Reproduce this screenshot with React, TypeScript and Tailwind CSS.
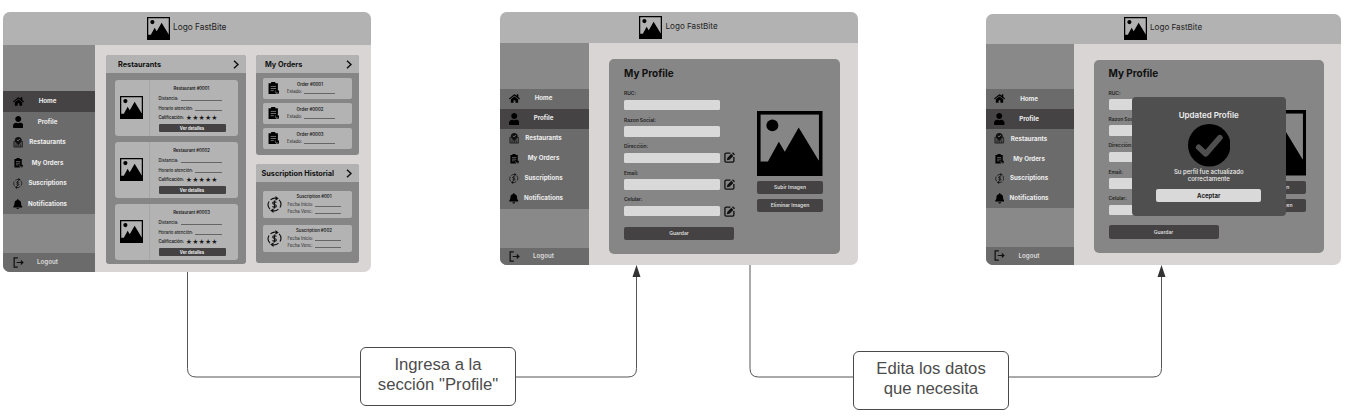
import type { ReactNode } from 'react';
import { FaBell, FaHome, FaUser } from 'react-icons/fa';

type IconProps = { className?: string };

function PictureIcon({ className = '' }: IconProps) {
  return (
    <svg viewBox="0 0 66 66" className={`block shrink-0 ${className}`}>
      <rect x="1.8" y="1.8" width="62.4" height="62.4" fill="none" stroke="#000" strokeWidth="3.6" />
      <circle cx="15.5" cy="14.5" r="6" />
      <path d="M2 51H11L22 31L28 41L42 16.500L62 49.500H64V64H2Z" />
    </svg>
  );
}

function ClipboardIcon({ className = '' }: IconProps) {
  return (
    <svg viewBox="0 0 22 24" className={`block shrink-0 ${className}`}>
      <path d="M1 2.500H6V0H14V2.500H19V14L15 23H1Z" />
      <path d="M14 21L15.500 17L19 15L22 18L20 23Z" />
      <path d="M5 8.500H15.500M5 12.500H15.500M5 16.500H11" stroke="#8a8a8a" strokeWidth="1.500" />
      <path d="M14 16V20.500H19" stroke="#aaa" strokeWidth="0.900" fill="none" />
    </svg>
  );
}

function CycleIcon({ className = '' }: IconProps) {
  return (
    <svg viewBox="0 0 24 28" className={`block shrink-0 ${className}`} fill="none" stroke="#111" strokeWidth="1.900">
      <path d="M4.500 21.500A10.300 10.300 0 0 1 3 9M5.500 6.500A10.500 10.500 0 0 1 14 3.700M19.500 6.500A10.300 10.300 0 0 1 21 19M18.500 21.500A10.500 10.500 0 0 1 10 24.300" />
      <path d="M13.500 0L19 4L13.500 8ZM10.500 20L5 24L10.500 28Z" fill="#111" stroke="none" />
      <path d="M15 11Q14.500 9.500 12 9.500Q9 9.500 9 11.700Q9 13.700 12 14Q15 14.300 15 16.400Q15 18.500 12 18.500Q9.300 18.500 8.900 16.900M12 7.500V20.500" />
    </svg>
  );
}

function StoreIcon({ className = '' }: IconProps) {
  return (
    <svg viewBox="0 0 24 24" className={`block shrink-0 ${className}`}>
      <path d="M2 10H22V23H2Z" fill="#4c4c4c" stroke="#1c1c1c" strokeWidth="1.800" />
      <path d="M12 0C7 0 4 3.500 4 7.500C4 12 12 18 12 18S20 12 20 7.500C20 3.500 17 0 12 0Z" fill="#111" />
      <path d="M9 6.500L11.500 9L15.500 4.500" fill="none" stroke="#999" strokeWidth="1.500" />
      <path d="M7 17V23M12 18V23M17 17V23" stroke="#1c1c1c" strokeWidth="1.500" />
    </svg>
  );
}

function LogoutIcon({ className = '' }: IconProps) {
  return (
    <svg viewBox="0 0 24 24" className={`block shrink-0 ${className}`} fill="none" stroke="#111" strokeWidth="2.700">
      <path d="M10.500 2H2.500V22H10.500M8 12H21" />
      <path d="M17 6L23.500 12L17 18Z" fill="#111" stroke="none" />
    </svg>
  );
}

function EditIcon({ className = '' }: IconProps) {
  return (
    <svg viewBox="0 0 24 24" className={`block shrink-0 ${className}`} fill="none" stroke="#111" strokeWidth="2.900">
      <path d="M14 2.500H4.500Q2 2.500 2 5V19.500Q2 22 4.500 22H19Q21.500 22 21.500 19.500V11" />
      <path d="M6 18L7.500 12.500L16 4L20.500 8.500L12 17ZM17.500 2.500L19.500 0.500L24 5L22 7Z" fill="#111" stroke="none" />
    </svg>
  );
}

function Chevron({ className = '' }: IconProps) {
  return (
    <svg viewBox="0 0 6 9" className={`block h-[9px] w-[6px] shrink-0 ${className}`} fill="none" stroke="#111" strokeWidth="1.500">
      <path d="M1 0.700L5 4.500L1 8.300" />
    </svg>
  );
}

const navItems = [
  { label: 'Home', icon: <FaHome className="size-[11px] text-black" /> },
  { label: 'Profile', icon: <FaUser className="h-[12px] w-[10.500px] text-black" /> },
  { label: 'Restaurants', icon: <StoreIcon className="size-[10.500px]" /> },
  { label: 'My Orders', icon: <ClipboardIcon className="h-[10px] w-[9px]" /> },
  { label: 'Suscriptions', icon: <CycleIcon className="h-[11px] w-[9.500px]" /> },
  { label: 'Notifications', icon: <FaBell className="h-[10.500px] w-[9.500px] text-black" /> },
];

type ScreenProps = {
  frame: string;
  header: string;
  logo: string;
  sidebar: string;
  item: string;
  navTop: string;
  logout: string;
  active: string;
  children: ReactNode;
};

function Screen({ frame, header, logo, sidebar, item, navTop, logout, active, children }: ScreenProps) {
  return (
    <div className={`absolute flex flex-col overflow-hidden rounded-[7px] bg-[#d9d5d5] ${frame}`}>
      <div className={`flex shrink-0 items-start bg-[#b2b2b2] ${header}`}>
        <div className={`flex items-center gap-[3.500px] ${logo}`}>
          <PictureIcon className="size-[23px]" />
          <span className="pb-[2px] leading-none text-[#222]">Logo FastBite</span>
        </div>
      </div>
      <div className="flex min-h-0 flex-1">
        <div className={`flex shrink-0 flex-col bg-[#898989] ${sidebar}`}>
          <div className={`bg-[#6b6b6b] ${navTop}`}>
            {navItems.map(({ label, icon }) => (
              <div key={label} className={`flex items-center ${item} ${label === active ? 'bg-[#464344]' : ''}`}>
                <span className="flex w-[14px] justify-center">{icon}</span>
                <span className="w-[45px] text-center text-[6.200px] leading-none font-bold whitespace-nowrap text-[#eee]">{label}</span>
              </div>
            ))}
          </div>
          <div className={`mt-auto flex items-center bg-[#6b6b6b] ${logout}`}>
            <span className="flex w-[14px] justify-center">
              <LogoutIcon className="size-[11px]" />
            </span>
            <span className="w-[45px] text-center text-[6.200px] leading-none font-semibold text-[#ddd]">Logout</span>
          </div>
        </div>
        {children}
      </div>
    </div>
  );
}

function Panel({ title, className, head, body, children }: { title: string; className: string; head: string; body: string; children: ReactNode }) {
  return (
    <div className={`flex flex-col overflow-hidden rounded-[3px] bg-[#868686] ${className}`}>
      <div className={`flex h-[18px] shrink-0 items-center justify-between bg-[#b2b2b2] ${head}`}>
        <span className="pt-[1px] text-[7.300px] leading-none font-bold whitespace-nowrap text-[#111]">{title}</span>
        <Chevron />
      </div>
      <div className={`flex flex-col ${body}`}>{children}</div>
    </div>
  );
}

function Blank({ label, className, line }: { label: string; className: string; line: string }) {
  return (
    <div className={`flex items-center ${className}`}>
      <span className="whitespace-nowrap">{label}</span>
      <span className={`mt-[4px] h-px bg-[#666] ${line}`} />
    </div>
  );
}

function RestaurantCard({ name }: { name: string }) {
  return (
    <div className="flex h-[55.500px] rounded-[3px] bg-[#b3b3b3]">
      <div className="flex w-[34.500px] items-center justify-center border-r border-[#a6a6a6]">
        <PictureIcon className="size-[23px]" />
      </div>
      <div className="flex flex-1 flex-col pl-[9px] text-[4.200px] leading-[5px] font-medium text-[#181818]">
        <div className="mt-[5.500px] w-[66px] text-center font-semibold">{name}</div>
        <Blank label="Distancia:" className="mt-[5px] h-[5px] w-[63px] justify-between" line="w-[41px]" />
        <Blank label="Horario atención:" className="mt-[5px] h-[5px] w-[63px] justify-between" line="w-[27px]" />
        <div className="mt-[4.500px] flex h-[5px] items-center gap-[2px] font-semibold">
          <span className="whitespace-nowrap">Calificación:</span>
          <span className="text-[6px] leading-none tracking-[0.100px]">★★★★★</span>
        </div>
        <div className="mt-[4px] flex h-[8px] w-[67px] items-center justify-center rounded-[1px] bg-[#454243] text-[4.200px] font-bold text-[#eee]">
          Ver detalles
        </div>
      </div>
    </div>
  );
}

function HomeContent() {
  return (
    <div className="flex flex-1 gap-[10.500px] pt-[10.500px] pl-[10.500px]">
      <Panel title="Restaurants" className="h-[208.500px] w-[140px]" head="pl-[12.500px] pr-[7px]" body="gap-[6.500px] pt-[7px] pr-[8px] pl-[9.500px]">
        {['Restaurant #0001', 'Restaurant #0002', 'Restaurant #0003'].map((name) => (
          <RestaurantCard key={name} name={name} />
        ))}
      </Panel>
      <div className="flex flex-col gap-[9.500px]">
        <Panel title="My Orders" className="h-[99.500px] w-[102.500px]" head="pl-[9px] pr-[6.500px]" body="gap-[3.500px] px-[6.500px] pt-[4.500px]">
          {['Order #0001', 'Order #0002', 'Order #0003'].map((name) => (
            <div key={name} className="flex h-[21.500px] items-center rounded-[2px] bg-[#b3b3b3] pl-[5px]">
              <ClipboardIcon className="h-[12.500px] w-[11.500px]" />
              <div className="-mt-[1px] ml-[8px] text-[4.300px] leading-[5px] text-[#222]">
                <div className="w-[46px] text-center font-semibold">{name}</div>
                <Blank label="Estado:" className="mt-[2.500px] h-[5px] w-[48px] justify-between" line="w-[31px]" />
              </div>
            </div>
          ))}
        </Panel>
        <Panel title="Suscription Historial" className="h-[99px] w-[102.500px]" head="pl-[5.500px] pr-[6.500px]" body="gap-[6.500px] px-[6.500px] pt-[9px]">
          {['Suscription #001', 'Suscription #002'].map((name) => (
            <div key={name} className="flex h-[27px] items-center rounded-[2px] bg-[#b3b3b3] pl-[4.500px]">
              <CycleIcon className="h-[17px] w-[15px]" />
              <div className="-mt-[1px] ml-[5.500px] text-[4.300px] leading-[5px] text-[#222]">
                <div className="w-[53px] text-center font-semibold">{name}</div>
                <Blank label="Fecha Inicio:" className="mt-[3px] h-[5px] w-[53px] justify-between" line="w-[26px]" />
                <Blank label="Fecha Venc:" className="mt-[2px] h-[5px] w-[53px] justify-between" line="w-[26px]" />
              </div>
            </div>
          ))}
        </Panel>
      </div>
    </div>
  );
}

const fields = [
  { label: 'RUC:', editable: false },
  { label: 'Razon Social:', editable: false },
  { label: 'Dirección:', editable: true },
  { label: 'Email:', editable: true },
  { label: 'Celular:', editable: true },
];

const darkButton = 'flex items-center justify-center rounded-[2px] bg-[#454243] text-[5px] font-semibold leading-none text-[#ddd]';

type ProfileProps = { className: string; form: string; row: string; side: string };

function ProfileContent({ className, form, row, side }: ProfileProps) {
  return (
    <div className={`flex rounded-[5px] bg-[#868686] ${className}`}>
      <div className={`flex shrink-0 flex-col ${form}`}>
        <div className="h-[11px] text-[10px] leading-[11px] font-bold text-[#111]">My Profile</div>
        <div className="mt-[11px] flex flex-col">
          {fields.map(({ label, editable }) => (
            <div key={label} className={`flex flex-col ${row}`}>
              <span className="h-[9.500px] text-[4.900px] leading-[6px] font-semibold text-[#222]">{label}</span>
              <div className="flex h-[10.500px] items-center justify-between">
                <span className="h-full w-[95.500px] rounded-[1.500px] bg-[#d9d9d9]" />
                {editable && <EditIcon className="size-[11px]" />}
              </div>
            </div>
          ))}
        </div>
        <div className={`mt-[4px] h-[13.500px] w-[110px] shrink-0 ${darkButton}`}>Guardar</div>
      </div>
      <div className={`flex shrink-0 flex-col ${side}`}>
        <PictureIcon className="size-[65.500px]" />
        <div className={`mt-[5px] h-[13px] ${darkButton}`}>Subir Imagen</div>
        <div className={`mt-[5px] h-[13px] ${darkButton}`}>Eliminar Imagen</div>
      </div>
    </div>
  );
}

function UpdatedDialog() {
  return (
    <div className="absolute top-[97px] left-[1132px] flex h-[119px] w-[153.500px] flex-col items-center rounded-[4px] bg-[#4f4f4f]">
      <div className="mt-[12.500px] text-[8px] leading-[10px] font-semibold text-[#eee]">Updated Profile</div>
      <svg viewBox="0 0 42 42" className="mt-[4.500px] block size-[42.500px] shrink-0">
        <circle cx="21" cy="21" r="21" />
        <path d="M10.500 23L17.500 29.500L31.500 13.500" fill="none" stroke="#4f4f4f" strokeWidth="5.500" strokeLinecap="round" strokeLinejoin="round" />
      </svg>
      <div className="mt-[1.500px] text-center text-[6px] leading-[7.200px] font-medium text-[#eee]">
        Su perfil fue actualizado
        <br />
        correctamente
      </div>
      <div className="mt-[7px] flex h-[13px] w-[105px] items-center justify-center rounded-[2px] bg-[#d9d9d9] text-[6px] font-bold text-[#222]">
        Aceptar
      </div>
    </div>
  );
}

function Step({ className, children }: { className: string; children: ReactNode }) {
  return (
    <div
      className={`absolute flex h-[59px] w-[156px] justify-center rounded-[6px] border border-[#4a4a4a] bg-white pt-[7px] text-center font-['Liberation_Sans',Arial,sans-serif] text-[16.700px] leading-[20px] text-[#4c4c4c] ${className}`}
    >
      <div>{children}</div>
    </div>
  );
}

export default function App() {
  return (
    <div className="relative h-[418px] w-[1351px] overflow-hidden bg-white font-['Inter',sans-serif]">
      <svg viewBox="0 0 1351 418" className="absolute inset-0 h-[418px] w-[1351px]" fill="none" stroke="#555" strokeWidth="1">
        <path d="M187.500 271V368.500Q187.500 377 196 377H628Q636.500 377 636.500 368.500V276" />
        <path d="M750 264V368.500Q750 377 758.500 377H1153Q1161.500 377 1161.500 368.500V276" />
        <path d="M636.500 265L640.500 277H632.500ZM1161.500 265L1165.500 277H1157.500Z" fill="#333" stroke="none" />
      </svg>
      <Screen
        frame="left-[3px] top-[12px] h-[259.500px] w-[368px]"
        header="h-[32.500px]"
        logo="mt-[4.500px] ml-[143.500px] text-[8.300px]"
        sidebar="w-[92px]"
        navTop="mt-[46.500px]"
        item="h-[20.500px] pl-[8px]"
        logout="h-[18.500px] pl-[8px]"
        active="Home"
      >
        <HomeContent />
      </Screen>
      <Screen
        frame="left-[500px] top-[12px] h-[252.500px] w-[358px]"
        header="h-[31px]"
        logo="mt-[4px] ml-[139px] text-[8.100px]"
        sidebar="w-[88.500px]"
        navTop="mt-[45.500px]"
        item="h-[20px] pl-[7px]"
        logout="h-[17px] pl-[7px]"
        active="Profile"
      >
        <ProfileContent
          className="mt-[16px] ml-[20.500px] h-[194.500px] w-[231px] pl-[15px]"
          form="w-[111px] pt-[9px]"
          row="h-[26.600px]"
          side="ml-[22px] w-[66px] pt-[51.500px]"
        />
      </Screen>
      <Screen
        frame="left-[986px] top-[14px] h-[251px] w-[355px]"
        header="h-[30px]"
        logo="mt-[3px] ml-[137.500px] text-[8.100px]"
        sidebar="w-[88px]"
        navTop="mt-[45px]"
        item="h-[19.900px] pl-[6.500px]"
        logout="h-[18.500px] pl-[6.500px]"
        active="Profile"
      >
        <ProfileContent
          className="mt-[15.500px] ml-[20px] h-[193px] w-[229.500px] pl-[14.500px]"
          form="w-[110.500px] pt-[8px]"
          row="h-[26.400px]"
          side="ml-[21.500px] w-[65.500px] pt-[50.500px]"
        />
      </Screen>
      <UpdatedDialog />
      <Step className="top-[347px] left-[360px]">
        Ingresa a la
        <br />
        sección "Profile"
      </Step>
      <Step className="top-[351px] left-[853px]">
        Edita los datos
        <br />
        que necesita
      </Step>
    </div>
  );
}
